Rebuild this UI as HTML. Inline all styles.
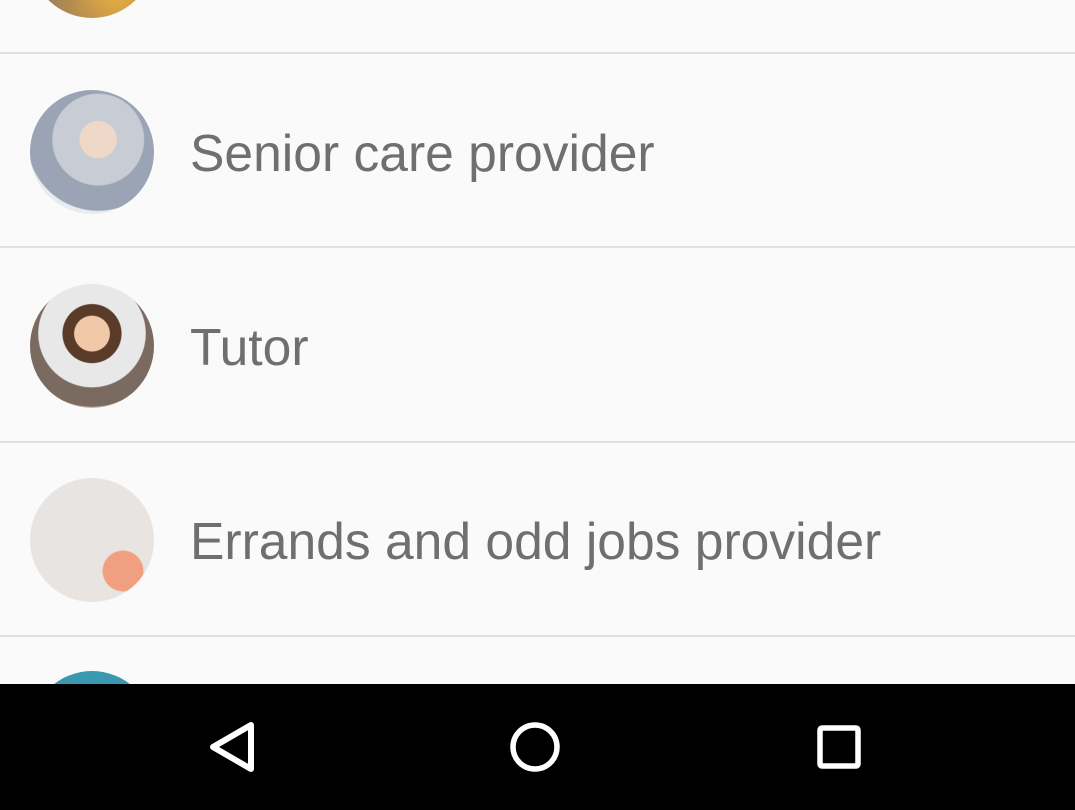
<!DOCTYPE html>
<html><head><meta charset="utf-8"><style>
html,body{margin:0;padding:0;width:1075px;height:810px;overflow:hidden;background:#fafafa;font-family:"Liberation Sans",sans-serif;}
.c{position:absolute;left:30px;width:124px;height:124px;border-radius:50%;overflow:hidden;}
.line{position:absolute;left:0;width:1075px;height:2px;background:#e0e0e0;}
.t{position:absolute;left:190px;font-size:51.6px;color:#6f6f6f;line-height:60px;}
.nav{position:absolute;left:0;top:684px;width:1075px;height:126px;background:#000;}
</style></head><body>
<div class="c" style="top:-106px;background:radial-gradient(circle at 70% 80%,#e8b040,#b08850 40%,#8a7a6a 70%);"></div>
<div class="line" style="top:52px"></div>
<div class="c" style="top:90px;background:radial-gradient(circle at 55% 40%,#f0d8c8 0 18%,#c8ccd4 19% 45%,#9aa4b4 46% 70%,#e8ecf0 71%);"></div>
<div class="t" style="top:123px">Senior care provider</div>
<div class="line" style="top:246px"></div>
<div class="c" style="top:284px;background:radial-gradient(circle at 50% 40%,#f2c9a8 0 18%,#5a3a28 19% 30%,#e8e8e8 31% 55%,#7a6a60 56% 75%,#c8b8a8 76%);"></div>
<div class="t" style="top:317px">Tutor</div>
<div class="line" style="top:441px"></div>
<div class="c" style="top:478px;background:radial-gradient(circle at 75% 75%,#f0a080 0 15%,#e8e4e2 16%);"></div>
<div class="t" style="top:511px">Errands and odd jobs provider</div>
<div class="line" style="top:635px"></div>
<div class="c" style="top:671px;background:#3a98b0;"></div>
<div class="nav">
<svg width="1075" height="126" style="position:absolute;left:0;top:0">
<polygon points="251,41 251,85 213,63" fill="none" stroke="#fff" stroke-width="6" stroke-linejoin="round"/>
<circle cx="535" cy="63" r="22" fill="none" stroke="#fff" stroke-width="5.5"/>
<rect x="820" y="44" width="38" height="38" rx="2" fill="none" stroke="#fff" stroke-width="5.5"/>
</svg>
</div>
</body></html>
